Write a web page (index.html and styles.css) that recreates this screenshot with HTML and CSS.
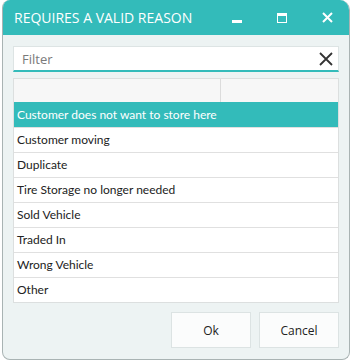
FILE: index.html
```html
<!DOCTYPE html>
<html lang="en">
<head>
  <meta charset="UTF-8">
  <title>Requires a valid reason</title>
  <link rel="stylesheet" href="styles.css">
</head>
<body>
  <div class="dialog">
    <div class="titlebar">
      <span class="title">REQUIRES A VALID REASON</span>
      <div class="win-buttons">
        <svg class="win-btn" width="10" height="10" viewBox="0 0 10 10"><rect x="0" y="7" width="10" height="3" fill="#fff"/></svg>
        <svg class="win-btn" width="10" height="10" viewBox="0 0 10 10"><rect x="0.5" y="0.5" width="9" height="9" fill="none" stroke="#fff"/><rect x="0" y="0" width="10" height="3" fill="#fff"/></svg>
        <svg class="win-btn" width="11" height="11" viewBox="0 0 11 11"><path d="M1 1L10 10M10 1L1 10" stroke="#fff" stroke-width="2"/></svg>
      </div>
    </div>

    <div class="content">
      <div class="filter">
        <input type="text" placeholder="Filter">
        <svg class="clear" width="16" height="16" viewBox="0 0 16 16"><path d="M2 2L14 14M14 2L2 14" stroke="#333" stroke-width="1.8"/></svg>
      </div>

      <div class="grid">
        <div class="grid-head">
          <div class="col"></div>
          <div class="col"></div>
        </div>
        <div class="row selected">Customer does not want to store here</div>
        <div class="row">Customer moving</div>
        <div class="row">Duplicate</div>
        <div class="row">Tire Storage no longer needed</div>
        <div class="row">Sold Vehicle</div>
        <div class="row">Traded In</div>
        <div class="row">Wrong Vehicle</div>
        <div class="row">Other</div>
      </div>

      <div class="actions">
        <button>Ok</button>
        <button>Cancel</button>
      </div>
    </div>
  </div>
</body>
</html>
```

FILE: styles.css
```css
* {
  margin: 0;
  padding: 0;
  box-sizing: border-box;
}

body {
  background: #fff;
  font-family: 'Open Sans', 'Noto Sans', sans-serif;
  font-size: 12px;
  color: #222;
}

.dialog {
  margin-left: 2px;
  width: 348px;
  height: 360px;
  background: #edf3f3;
  border: 1px solid #a9b3b3;
  border-top: none;
  border-radius: 8px 10px 8px 8px;
  overflow: hidden;
  display: flex;
  flex-direction: column;
}

.titlebar {
  height: 36px;
  background: #33bbba;
  display: flex;
  align-items: center;
  justify-content: space-between;
  padding: 0 16px 0 11px;
}

.title {
  color: #fff;
  font-size: 14px;
  letter-spacing: 0;
}

.win-buttons {
  display: flex;
  align-items: center;
  gap: 35px;
}

.win-btn {
  display: block;
}

.content {
  padding: 11px 10px 11px 10px;
  display: flex;
  flex-direction: column;
}

.filter {
  height: 26px;
  background: #fff;
  border: 1px solid #dde4e4;
  border-bottom: 2px solid #33bbba;
  display: flex;
  align-items: center;
  padding: 0 4px 0 8px;
}

.filter input {
  flex: 1;
  border: none;
  outline: none;
  font-family: inherit;
  font-size: 13px;
  color: #222;
  background: transparent;
}

.filter input::placeholder {
  color: #7a7a7a;
}

.clear {
  display: block;
}

.grid {
  margin-top: 6px;
  background: #fff;
  border: 1px solid #dcdfdf;
}

.grid-head {
  height: 23px;
  background: #f7f7f7;
  display: flex;
}

.grid-head .col:first-child {
  width: 207px;
  border-right: 1px solid #dcdcdc;
}

.row {
  height: 25px;
  line-height: 24px;
  padding-left: 3px;
  border-top: 1px solid #e0e0e0;
  font-family: 'Lato', 'Open Sans', sans-serif;
  font-size: 12px;
}

.row.selected {
  background: #33bbba;
  color: #fff;
  border-top-color: #33bbba;
}

.actions {
  margin-top: 9px;
  display: flex;
  justify-content: flex-end;
  gap: 8px;
}

.actions button {
  width: 80px;
  height: 36px;
  background: #fbfcfc;
  border: 1px solid #dce3e3;
  font-family: inherit;
  font-size: 12px;
  color: #222;
}
```
